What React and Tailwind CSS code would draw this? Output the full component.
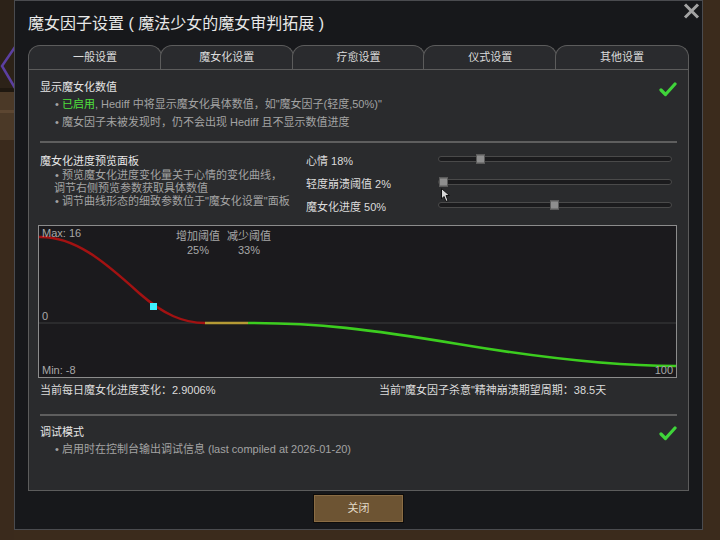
import React from 'react'

const tabs = ['一般设置', '魔女化设置', '疗愈设置', '仪式设置', '其他设置']

const sliders = [
  { label: '心情 18%', pct: 18 },
  { label: '轻度崩溃阈值 2%', pct: 2 },
  { label: '魔女化进度 50%', pct: 50 },
]

function Check() {
  return (
    <svg width="18" height="15" viewBox="0 0 18 15">
      <path d="M2 8 L6.5 12.5 L16 2" fill="none" stroke="#3fd43a" strokeWidth="3.2" strokeLinecap="round" strokeLinejoin="round" />
    </svg>
  )
}

function Slider({ label, pct }) {
  return (
    <div className="flex h-[23px] items-center">
      <div className="w-[132px] text-[11px] text-[#dcdcdc]">{label}</div>
      <div className="relative mr-[5px] mb-[6px] h-[6px] flex-1 rounded-full border border-[#4a4a4a] bg-[#1b1b1d]">
        <div
          className="absolute top-1/2 h-[9px] w-[9px] -translate-y-1/2 border border-[#5a5a5a] bg-[#8e8e8e]"
          style={{ left: `calc(${pct}% - 5px)` }}
        />
      </div>
    </div>
  )
}

function Chart() {
  return (
    <div className="relative -ml-[2px] mt-[6px] h-[153px] w-[639px] border border-[#8c8c8c] bg-[#1b1a1d]">
      <svg className="absolute inset-0" width="637" height="151" viewBox="0 0 637 151">
        <line x1="0" y1="97" x2="637" y2="97" stroke="#3c3c3e" strokeWidth="1" />
        <path d="M0 11 C35 10 65 35 100 67 C125 89 145 97 166 97" fill="none" stroke="#a31212" strokeWidth="2.4" />
        <path d="M166 97 L209 97" fill="none" stroke="#b59a35" strokeWidth="2.4" />
        <path d="M209 97 C279 97 329 103 419 118 C509 133 579 140 637 140" fill="none" stroke="#3ccd1f" strokeWidth="2.6" />
        <rect x="111" y="77" width="7" height="7" fill="#3ff0ff" />
      </svg>
      <div className="absolute left-[3px] top-[0px] text-[11px] leading-[14px] text-[#a8a8a8]">Max: 16</div>
      <div className="absolute left-[3px] top-[83px] text-[11px] leading-[14px] text-[#a8a8a8]">0</div>
      <div className="absolute bottom-[0px] left-[3px] text-[11px] leading-[14px] text-[#a8a8a8]">Min: -8</div>
      <div className="absolute bottom-[0px] right-[3px] text-[11px] leading-[14px] text-[#a8a8a8]">100</div>
      <div className="absolute left-[134px] top-[3px] w-[50px] text-center text-[11px] leading-[14px] text-[#a8a8a8]">
        <div>增加阈值</div>
        <div>25%</div>
      </div>
      <div className="absolute left-[185px] top-[3px] w-[50px] text-center text-[11px] leading-[14px] text-[#a8a8a8]">
        <div>减少阈值</div>
        <div>33%</div>
      </div>
    </div>
  )
}

export default function App() {
  return (
    <div className="relative flex h-[540px] w-[720px] overflow-hidden bg-[#3b2b1c] pl-[14px] font-['Liberation_Sans','Noto_Sans_CJK_SC',sans-serif]">
      <svg className="absolute left-0 top-0" width="14" height="540" viewBox="0 0 14 540">
        <rect x="0" y="0" width="14" height="88" fill="#2c2218" />
        <rect x="0" y="88" width="14" height="4" fill="#1f1810" />
        <rect x="0" y="92" width="14" height="48" fill="#4b3927" />
        <rect x="0" y="110" width="14" height="3" fill="#5c4631" />
        <rect x="0" y="140" width="14" height="400" fill="#3a2a1c" />
        <path d="M15 47 L2 66 L15 88" fill="none" stroke="#5b3fa0" strokeWidth="2.5" />
      </svg>

      <div className="relative flex h-[530px] w-[689px] flex-col border border-[#4a4b4f] bg-[#17181b] px-[13px]">
        <div className="absolute right-[2px] top-[2px]">
          <svg width="17" height="16" viewBox="0 0 17 16">
            <path d="M2 1.5 L15 14.5 M15 1.5 L2 14.5" stroke="#a3a3a3" strokeWidth="3" />
          </svg>
        </div>

        <div className="h-[44px] whitespace-pre pt-[15px] text-[16px] leading-[16px] text-[#e8e8e8]">魔女因子设置 ( 魔法少女的魔女审判拓展 )</div>

        <div className="flex h-[24px]">
          {tabs.map((t, i) => (
            <div
              key={t}
              className={`flex flex-1 items-center justify-center rounded-t-[12px] border border-b-0 border-[#5c5c5c] bg-[#2a2b2e] text-[11px] text-[#dcdcdc] ${i > 0 ? '-ml-[2px]' : ''}`}
            >
              {t}
            </div>
          ))}
        </div>

        <div className="h-[422px] border border-[#5c5c5c] bg-[#2a2b2d] px-[11px] pt-[9px]">
          <div className="flex justify-between">
            <div>
              <div className="text-[11px] leading-[16px] text-[#e6e6e6]">显示魔女化数值</div>
              <div className="pl-[15px] text-[11px] leading-[18px] text-[#a3a3a3]">
                • <span className="text-[#4ee03c]">已启用</span>, Hediff 中将显示魔女化具体数值，如"魔女因子(轻度,50%)"
              </div>
              <div className="pl-[15px] text-[11px] leading-[18px] text-[#a3a3a3]">• 魔女因子未被发现时，仍不会出现 Hediff 且不显示数值进度</div>
            </div>
            <div className="mt-[3px]">
              <Check />
            </div>
          </div>

          <div className="mt-[10px] h-[2px] bg-[#5e5e5e]" />

          <div className="mt-[10px] flex items-start">
            <div className="w-[266px]">
              <div className="text-[11px] leading-[16px] text-[#e6e6e6]">魔女化进度预览面板</div>
              <div className="whitespace-nowrap pl-[15px] text-[11px] leading-[13px] text-[#a3a3a3]">
                <div>• 预览魔女化进度变化量关于心情的变化曲线，</div>
                <div className="-ml-[1px]">调节右侧预览参数获取具体数值</div>
                <div>• 调节曲线形态的细致参数位于"魔女化设置"面板</div>
              </div>
            </div>
            <div className="-mt-[3px] flex-1">
              {sliders.map((s) => (
                <Slider key={s.label} label={s.label} pct={s.pct} />
              ))}
            </div>
          </div>

          <Chart />

          <div className="mt-[4px] flex text-[11px] leading-[16px] text-[#dcdcdc]">
            <div className="w-[339px]">当前每日魔女化进度变化：2.9006%</div>
            <div>当前"魔女因子杀意"精神崩溃期望周期：38.5天</div>
          </div>

          <div className="mt-[16px] h-[2px] bg-[#5e5e5e]" />

          <div className="mt-[8px] flex justify-between">
            <div>
              <div className="text-[11px] leading-[16px] text-[#e6e6e6]">调试模式</div>
              <div className="pl-[15px] text-[11px] leading-[18px] text-[#a3a3a3]">• 启用时在控制台输出调试信息 (last compiled at 2026-01-20)</div>
            </div>
            <div className="mt-[2px]">
              <Check />
            </div>
          </div>
        </div>

        <div className="mt-[3px] flex justify-center">
          <div className="flex h-[29px] w-[91px] items-center justify-center border border-[#0e0c0a] bg-[#6d5433] text-[11px] text-[#e2d9c6] shadow-[inset_0_0_0_1px_#8a6c44]">
            关闭
          </div>
        </div>
      </div>

      <svg className="absolute left-[441px] top-[188px]" width="10" height="15" viewBox="0 0 10 15">
        <path d="M0.5 0.5 L0.5 11 L3 8.5 L5 13.5 L7 12.5 L5 7.5 L8.5 7.5 Z" fill="#d8d8d8" stroke="#111" strokeWidth="1" />
      </svg>
    </div>
  )
}
